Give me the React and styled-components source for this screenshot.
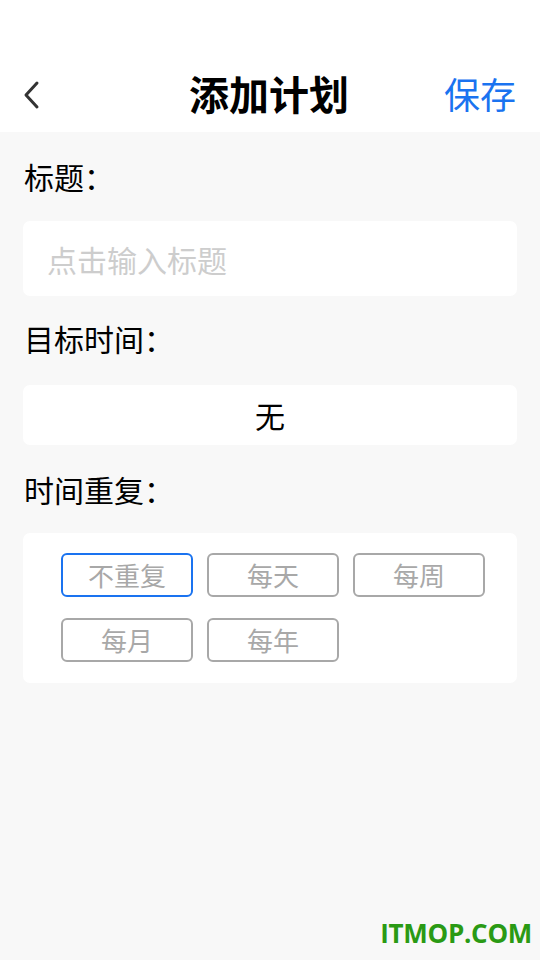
import React from "react";
import styled, { createGlobalStyle } from "styled-components";

const Global = createGlobalStyle`
  html, body { margin: 0; padding: 0; background: #f8f8f8; }
  body { font-family: "Noto Sans CJK SC", "Noto Sans", sans-serif; }
  * { box-sizing: border-box; }
`;

const Page = styled.div`
  width: 540px;
  height: 960px;
  background: #f8f8f8;
  display: flex;
  flex-direction: column;
  position: relative;
`;

const Header = styled.div`
  height: 132px;
  background: #fff;
  display: grid;
  grid-template-columns: 1fr auto 1fr;
  align-items: center;
  padding: 58px 24px 0 22px;
`;

const Back = styled.div`
  display: flex;
  align-items: center;
`;

const Title = styled.div`
  font-size: 40px;
  font-weight: 700;
  color: #000;
  line-height: 1;
  margin-top: -4px;
`;

const Save = styled.div`
  justify-self: end;
  font-size: 36px;
  color: #1a73f0;
  line-height: 1;
  margin-top: -4px;
`;

const Body = styled.div`
  display: flex;
  flex-direction: column;
  padding: 0 23px;
`;

const Label = styled.div`
  font-size: 30px;
  color: #000;
  line-height: 1;
  padding-left: 1px;
  margin-top: ${(p) => p.$top}px;
  margin-bottom: ${(p) => p.$bottom}px;
`;

const Card = styled.div`
  background: #fff;
  border-radius: 7px;
  height: ${(p) => p.$h}px;
  flex-shrink: 0;
  display: flex;
  align-items: ${(p) => (p.$top ? "flex-start" : "center")};
  justify-content: ${(p) => (p.$center ? "center" : "flex-start")};
  padding: ${(p) => p.$pad || "0 24px"};
  font-size: 30px;
  color: ${(p) => p.$color || "#000"};
  line-height: 1;
`;

const Grid = styled.div`
  display: grid;
  grid-template-columns: repeat(3, 132px);
  column-gap: 14px;
  row-gap: 21px;
  align-content: start;
  width: 100%;
`;

const Option = styled.div`
  height: 44px;
  border: 2px solid ${(p) => (p.$active ? "#1a73f0" : "#a8a8a8")};
  border-radius: 6px;
  display: flex;
  align-items: center;
  justify-content: center;
  font-size: 26px;
  color: #a8a8a8;
  line-height: 1;
`;

const Watermark = styled.div`
  position: absolute;
  right: 8px;
  bottom: 9px;
  font-family: "Open Sans", "Liberation Sans", sans-serif;
  font-weight: 700;
  font-size: 26px;
  color: #2a9a14;
  letter-spacing: -0.3px;
`;

const options = ["不重复", "每天", "每周", "每月", "每年"];

export default function App() {
  return (
    <>
      <Global />
      <Page>
        <Header>
          <Back>
            <svg width="20" height="30" viewBox="0 0 20 30">
              <path d="M15 3 L4 15 L15 27" fill="none" stroke="#333" strokeWidth="3" strokeLinecap="round" strokeLinejoin="round" />
            </svg>
          </Back>
          <Title>添加计划</Title>
          <Save>保存</Save>
        </Header>
        <Body>
          <Label $top={29} $bottom={30}>标题：</Label>
          <Card $h={75} $color="#cdcdcd">点击输入标题</Card>
          <Label $top={27} $bottom={32}>目标时间：</Label>
          <Card $h={60} $center>无</Card>
          <Label $top={29} $bottom={29}>时间重复：</Label>
          <Card $h={150} $top $pad="20px 0 0 38px">
            <Grid>
              {options.map((o, i) => (
                <Option key={o} $active={i === 0}>{o}</Option>
              ))}
            </Grid>
          </Card>
        </Body>
        <Watermark>ITMOP.COM</Watermark>
      </Page>
    </>
  );
}
